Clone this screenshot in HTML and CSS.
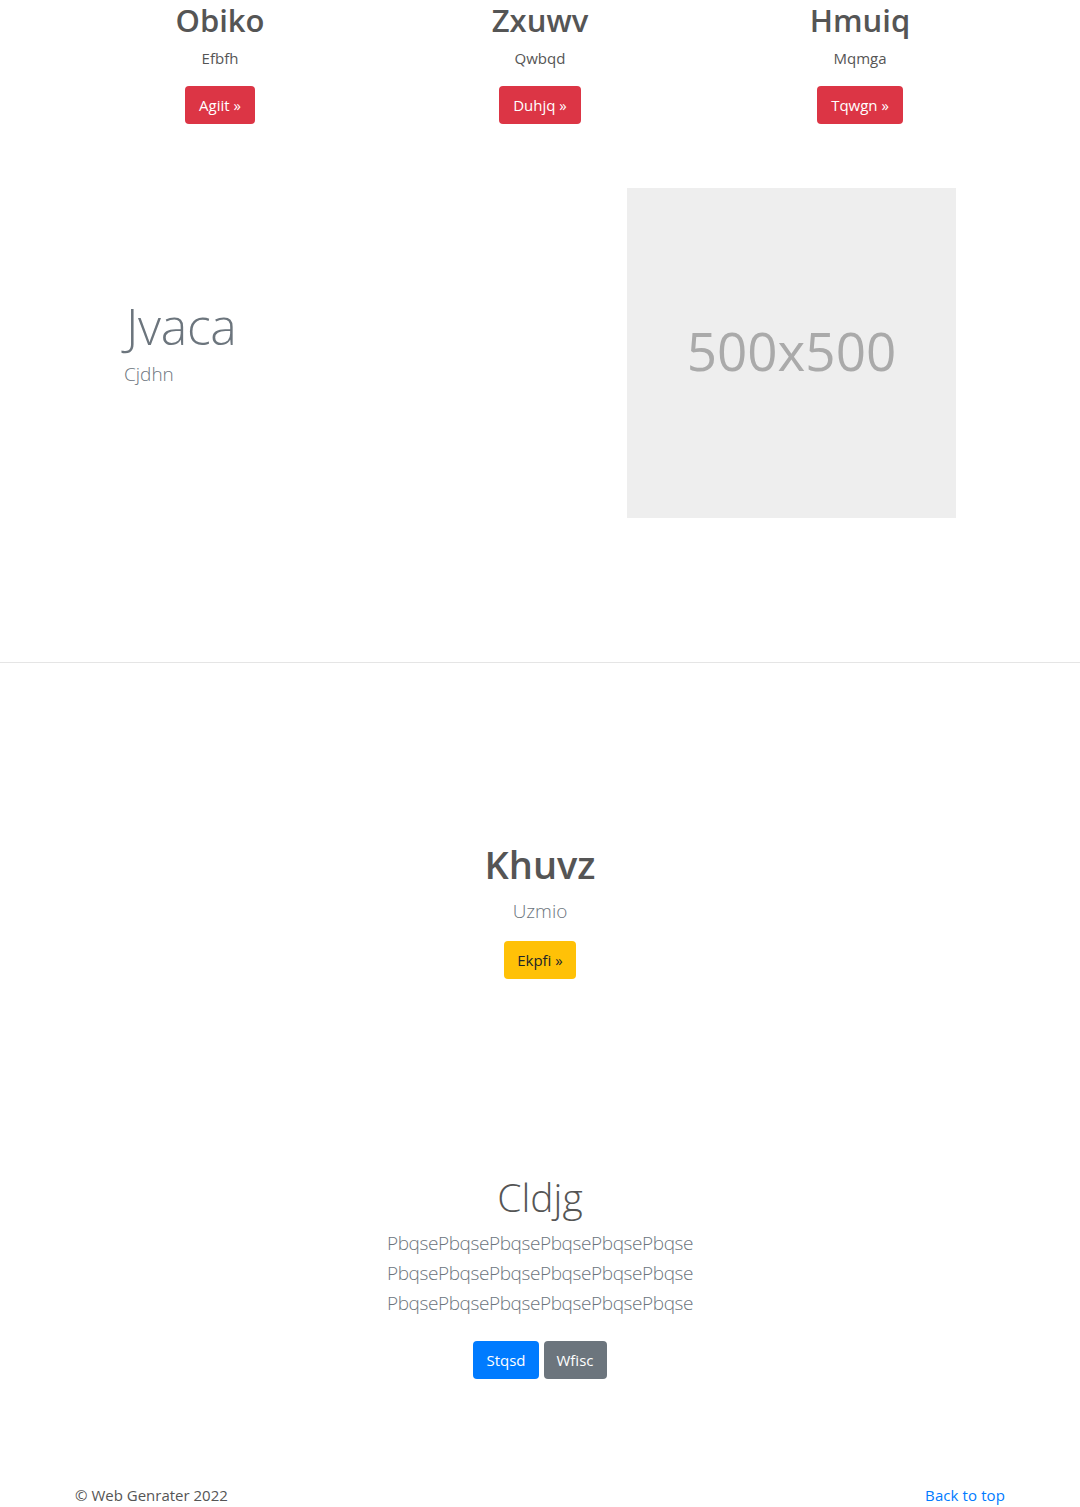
FILE: index.html
```html
<!DOCTYPE html>
<html lang="en">
<head>
<meta charset="utf-8">
<title>Marketing</title>
<link rel="stylesheet" href="styles.css">
</head>
<body>
<main>
  <div class="container marketing">
    <div class="col">
      <h2 class="col-title">Obiko</h2>
      <p class="col-text">Efbfh</p>
      <a class="btn btn-danger" href="#">Agiit &raquo;</a>
    </div>
    <div class="col">
      <h2 class="col-title">Zxuwv</h2>
      <p class="col-text">Qwbqd</p>
      <a class="btn btn-danger" href="#">Duhjq &raquo;</a>
    </div>
    <div class="col">
      <h2 class="col-title">Hmuiq</h2>
      <p class="col-text">Mqmga</p>
      <a class="btn btn-danger" href="#">Tqwgn &raquo;</a>
    </div>
  </div>

  <div class="container featurette">
    <div class="feat-text">
      <h2 class="feat-heading">Jvaca</h2>
      <p class="lead muted">Cjdhn</p>
    </div>
    <div class="feat-image">
      <div class="placeholder">500x500</div>
    </div>
  </div>

  <hr class="divider">

  <section class="center-block first">
    <h1 class="big-title">Khuvz</h1>
    <p class="lead muted">Uzmio</p>
    <a class="btn btn-warning" href="#">Ekpfi &raquo;</a>
  </section>

  <section class="center-block second">
    <h1 class="light-title">Cldjg</h1>
    <p class="lead muted para">
      <span>PbqsePbqsePbqsePbqsePbqsePbqse</span>
      <span>PbqsePbqsePbqsePbqsePbqsePbqse</span>
      <span>PbqsePbqsePbqsePbqsePbqsePbqse</span>
    </p>
    <div class="btn-row">
      <a class="btn btn-primary" href="#">Stqsd</a>
      <a class="btn btn-secondary" href="#">Wfisc</a>
    </div>
  </section>
</main>

<footer class="container footer">
  <p>&copy; Web Genrater 2022</p>
  <a href="#" class="back">Back to top</a>
</footer>
</body>
</html>
```

FILE: styles.css
```css
* { box-sizing: border-box; }
html, body { margin: 0; padding: 0; }
body {
  font-family: "Open Sans", "Noto Sans", "DejaVu Sans", sans-serif;
  font-size: 16px;
  line-height: 1.5;
  color: #555;
  background: #fff;
}
.container {
  width: 960px;
  margin: 0 auto;
}
.marketing {
  display: grid;
  grid-template-columns: repeat(3, 1fr);
}
.col {
  text-align: center;
  padding: 0 15px;
}
.col-title {
  margin: 0;
  font-size: 31px;
  font-weight: 600;
  line-height: 40px;
  color: #555;
}
.col-text {
  margin: 6px 0 16px;
  font-size: 15px;
  line-height: 24px;
  color: #555;
}
.btn {
  display: inline-block;
  height: 38px;
  padding: 0 14px;
  font-size: 15px;
  line-height: 38px;
  border-radius: 4px;
  text-decoration: none;
  color: #fff;
  vertical-align: top;
}
.btn-danger { background: #dc3545; }
.btn-warning { background: #ffc107; color: #212529; padding: 0 13px; }
.btn-primary { background: #007bff; padding: 0 13px; }
.btn-secondary { background: #6c757d; padding: 0 13px; }

.featurette {
  display: flex;
  align-items: center;
  margin-top: 64px;
}
.feat-text {
  width: 567px;
  padding-left: 66px;
}
.feat-heading {
  margin: 0 0 8px;
  font-size: 50px;
  font-weight: 300;
  line-height: 1;
  color: #6c757d;
  letter-spacing: -0.3px;
}
.lead {
  font-size: 19px;
  font-weight: 300;
  line-height: 30px;
}
.muted { color: #6c757d; }
.feat-text .lead { margin: 0 0 16px -2px; }
.feat-image { width: 329px; }
.placeholder {
  width: 329px;
  height: 330px;
  background: #eee;
  color: #aaa;
  font-size: 53px;
  display: flex;
  align-items: center;
  justify-content: center;
  padding-bottom: 4px;
}
.divider {
  margin: 144px 0 0;
  border: 0;
  border-top: 1px solid #e5e5e5;
  height: 0;
}
.center-block { text-align: center; }
.first { margin-top: 177px; }
.big-title {
  margin: 0 0 8px;
  font-size: 38px;
  font-weight: 600;
  line-height: 48px;
  color: #555;
}
.first .lead { margin: 0 0 15px; }
.second { margin-top: 194px; }
.light-title {
  margin: 0 0 7px;
  font-size: 39px;
  font-weight: 300;
  line-height: 48px;
  color: #555;
}
.para { margin: 0 0 23px; }
.para span { display: block; letter-spacing: -0.4px; }
.btn-row {
  display: flex;
  justify-content: center;
  gap: 5px;
}
.footer {
  margin-top: 104px;
  padding: 0 15px;
  display: flex;
  justify-content: space-between;
  line-height: 24px;
  font-size: 15px;
}
.footer p { margin: 0; color: #555; }
.back { color: #007bff; text-decoration: none; letter-spacing: 0.1px; }
```
